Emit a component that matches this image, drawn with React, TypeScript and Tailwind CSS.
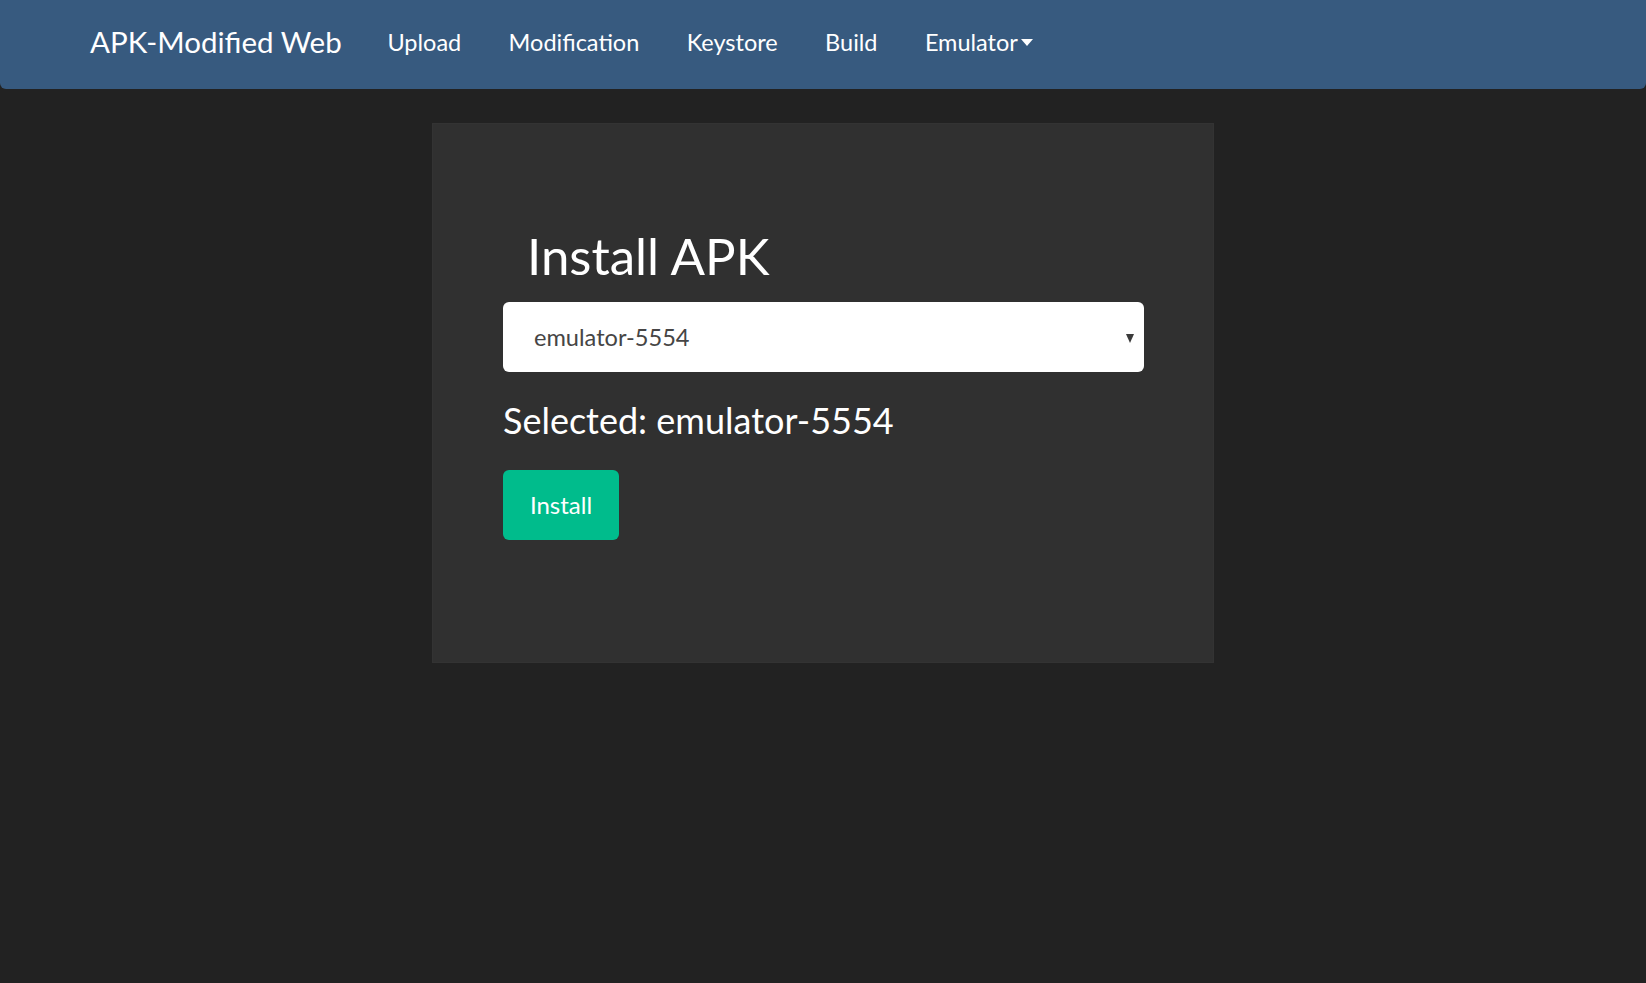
import { useState } from "react";

const navItems = ["Upload", "Modification", "Keystore", "Build"];

function Caret() {
  return (
    <svg className="ml-[3px] h-[7px] w-[12px]" viewBox="0 0 12 7" aria-hidden>
      <polygon points="0,0 12,0 6,7" fill="#ffffff" />
    </svg>
  );
}

export default function App() {
  const [device] = useState("emulator-5554");

  return (
    <div className="min-h-[983px] bg-[#222222] font-['Lato','Noto_Sans',sans-serif] text-white">
      <nav className="flex h-[89px] items-start rounded-b-[6px] bg-[#375a7f] pl-[67px]">
        <a href="#" className="pl-[23px] pr-[22px] pt-[20px] text-[29.5px] leading-normal text-white">
          APK-Modified Web
        </a>
        {navItems.map((label) => (
          <a key={label} href="#" className="px-[23.7px] pt-[25px] text-[23.5px] leading-normal text-white">
            {label}
          </a>
        ))}
        <a href="#" className="flex items-center px-[23.7px] pt-[25px] text-[23.5px] leading-normal text-white">
          Emulator
          <Caret />
        </a>
      </nav>

      <div className="mx-auto mt-[34px] h-[540px] w-[782px] border border-[#333333] bg-[#303030] pl-[70px] pr-[69px] pt-[104px]">
        <h2 className="pl-[24px] text-[51px] leading-[1.1] font-normal text-white">Install APK</h2>

        <div className="mt-[18px] flex h-[70px] w-[641px] items-center justify-between rounded-[6px] bg-white pl-[31px] pr-[10px] pt-[2px]">
          <span className="text-[23.6px] leading-normal text-[#464545]">{device}</span>
          <svg className="h-[9px] w-[8px]" viewBox="0 0 8 9" aria-hidden>
            <polygon points="0,0 8,0 4,9" fill="#3a3a3a" />
          </svg>
        </div>

        <h3 className="mt-[29px] text-[36px] leading-[1.1] font-normal text-white">Selected: {device}</h3>

        <button
          type="button"
          className="mt-[29px] flex h-[70px] w-[116px] items-center justify-center rounded-[6px] bg-[#00bc8c] text-[24px] leading-normal text-white"
        >
          Install
        </button>
      </div>
    </div>
  );
}
